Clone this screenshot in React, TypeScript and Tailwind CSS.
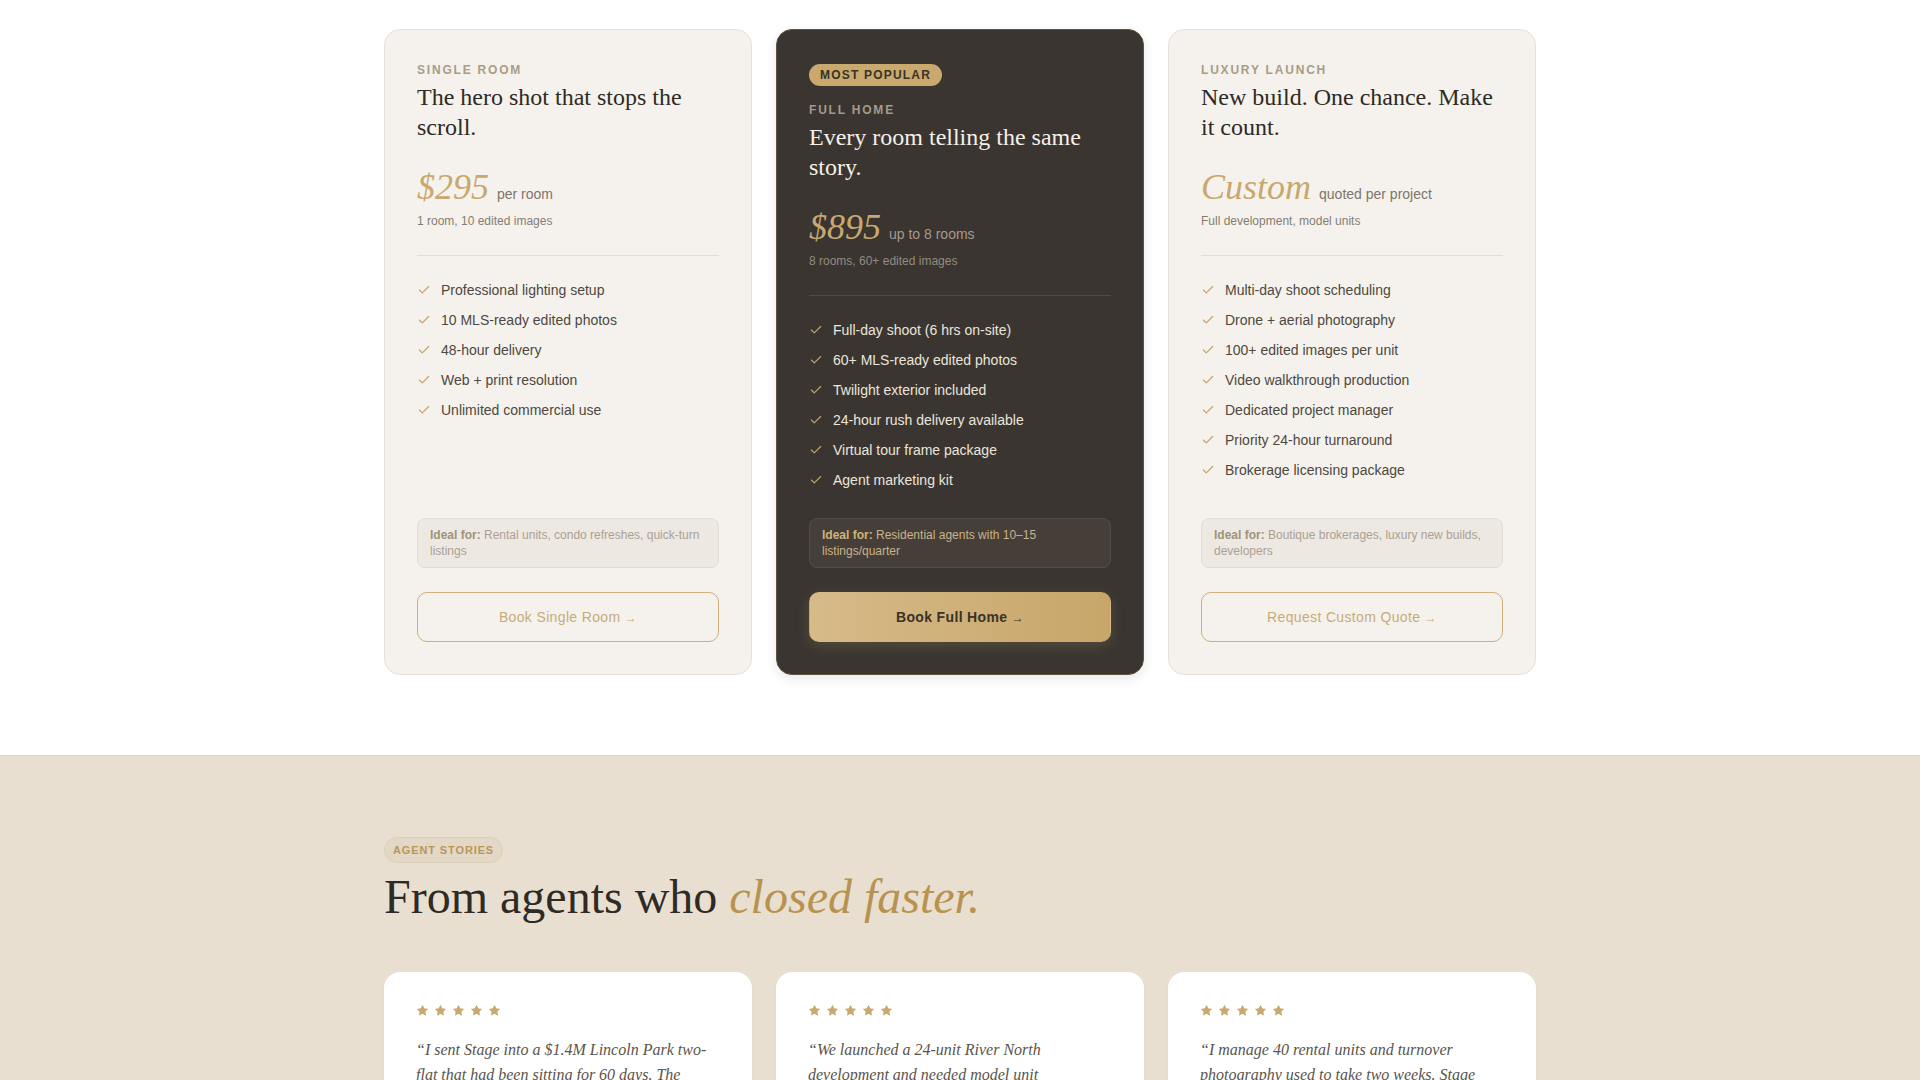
import { Check, Star } from "lucide-react";

const serif = { fontFamily: '"Liberation Serif", "Times New Roman", serif' };

interface Plan {
  key: string;
  label: string;
  title: string;
  price: string;
  unit: string;
  note: string;
  features: string[];
  ideal: string;
  cta: string;
  featured?: boolean;
}

const plans: Plan[] = [
  {
    key: "single",
    label: "Single Room",
    title: "The hero shot that stops the scroll.",
    price: "$295",
    unit: "per room",
    note: "1 room, 10 edited images",
    features: [
      "Professional lighting setup",
      "10 MLS-ready edited photos",
      "48-hour delivery",
      "Web + print resolution",
      "Unlimited commercial use",
    ],
    ideal: "Rental units, condo refreshes, quick-turn listings",
    cta: "Book Single Room",
  },
  {
    key: "full",
    label: "Full Home",
    title: "Every room telling the same story.",
    price: "$895",
    unit: "up to 8 rooms",
    note: "8 rooms, 60+ edited images",
    features: [
      "Full-day shoot (6 hrs on-site)",
      "60+ MLS-ready edited photos",
      "Twilight exterior included",
      "24-hour rush delivery available",
      "Virtual tour frame package",
      "Agent marketing kit",
    ],
    ideal: "Residential agents with 10–15 listings/quarter",
    cta: "Book Full Home",
    featured: true,
  },
  {
    key: "luxury",
    label: "Luxury Launch",
    title: "New build. One chance. Make it count.",
    price: "Custom",
    unit: "quoted per project",
    note: "Full development, model units",
    features: [
      "Multi-day shoot scheduling",
      "Drone + aerial photography",
      "100+ edited images per unit",
      "Video walkthrough production",
      "Dedicated project manager",
      "Priority 24-hour turnaround",
      "Brokerage licensing package",
    ],
    ideal: "Boutique brokerages, luxury new builds, developers",
    cta: "Request Custom Quote",
  },
];

const stories = [
  "\u201CI sent Stage into a $1.4M Lincoln Park two-flat that had been sitting for 60 days. The reshoot went live on a Thursday and we had three showings booked by Saturday.\u201D",
  "\u201CWe launched a 24-unit River North development and needed model unit photography that felt consistent across every floor plan. They delivered in a week.\u201D",
  "\u201CI manage 40 rental units and turnover photography used to take two weeks. Stage gets every unit shot and listed within 48 hours now.\u201D",
];

function PlanCard({ plan }: { plan: Plan }) {
  const dark = plan.featured;
  return (
    <div
      className={`flex flex-col rounded-2xl border p-8 ${
        dark
          ? "border-[#5f523f] bg-[#3a3531] shadow-[0_4px_12px_rgba(58,53,49,0.10)]"
          : "border-[#e6e0d7] bg-[#f5f2ed]"
      }`}
    >
      {dark && (
        <div className="mb-4">
          <span className="inline-block rounded-full bg-[#c9a96e] px-[11px] py-[3px] text-xs leading-4 font-bold tracking-[0.1em] text-[#3a3226] uppercase">
            Most Popular
          </span>
        </div>
      )}
      <div
        className={`text-xs leading-4 font-bold tracking-[0.15em] uppercase ${
          dark ? "text-[#a59a8a]" : "text-[#a99c88]"
        }`}
      >
        {plan.label}
      </div>
      <h3
        style={serif}
        className={`mt-1 text-2xl leading-[1.25] ${dark ? "text-[#f5f0e8]" : "text-[#2e2a25]"}`}
      >
        {plan.title}
      </h3>
      <div className="mt-[27px] flex items-baseline gap-2">
        <span style={serif} className="text-4xl leading-none text-[#c8a86e] italic">
          {plan.price}
        </span>
        <span className={`text-sm ${dark ? "text-[#a39a8e]" : "text-[#7d756b]"}`}>{plan.unit}</span>
      </div>
      <p className={`mt-2 text-xs leading-4 ${dark ? "text-[#958b7f]" : "text-[#857d72]"}`}>
        {plan.note}
      </p>
      <div className={`mt-[26px] mb-6 h-px ${dark ? "bg-[#524a42]" : "bg-[#e5ded3]"}`} />
      <ul className="mb-7 flex flex-1 flex-col gap-2.5">
        {plan.features.map((f) => (
          <li key={f} className="flex items-center gap-2.5">
            <Check size={14} strokeWidth={2} className="shrink-0 text-[#c1a36b]" />
            <span className={`text-sm leading-5 ${dark ? "text-[#ebe5dc]" : "text-[#4d4840]"}`}>{f}</span>
          </li>
        ))}
      </ul>
      <div
        className={`rounded-lg border px-3 py-2 text-xs leading-4 ${
          dark
            ? "border-[#554c43] bg-[#463f39] text-[#c9b38b]"
            : "border-[#e2dcd3] bg-[#ede8e1] text-[#aaa196]"
        }`}
      >
        <span className={`font-bold ${dark ? "text-[#d0b27a]" : "text-[#a0937f]"}`}>Ideal for:</span>{" "}
        {plan.ideal}
      </div>
      <button
        className={`mt-6 rounded-[10px] py-3.5 text-sm leading-5 tracking-wide ${
          dark
            ? "border border-transparent bg-gradient-to-r from-[#d6ba88] to-[#c8a66a] font-bold text-[#3a3226] shadow-[0_4px_14px_rgba(201,169,110,0.2)]"
            : "border border-[#cdb07a] font-medium text-[#c9ab78]"
        }`}
      >
        {plan.cta} <span className="text-xs">→</span>
      </button>
    </div>
  );
}

export default function App() {
  return (
    <div className="min-h-screen bg-white" style={{ fontFamily: '"Liberation Sans", Arial, sans-serif' }}>
      {/* Pricing */}
      <section className="pt-[29px] pb-20">
        <div className="mx-auto grid max-w-6xl grid-cols-3 gap-6">
          {plans.map((p) => (
            <PlanCard key={p.key} plan={p} />
          ))}
        </div>
      </section>

      {/* Testimonials */}
      <section className="border-t border-[#e0d6c6] bg-[#e8dfd1] pt-[81px] pb-24">
        <div className="mx-auto max-w-6xl">
          <span className="inline-block rounded-full border border-[#ddd0ba] bg-[#e3d8c5] px-2 py-1 text-[11px] leading-4 font-bold tracking-[0.08em] text-[#b8975a] uppercase">
            Agent Stories
          </span>
          <h2 style={serif} className="mt-2 text-5xl leading-[1.1] text-[#2e2a25]">
            From agents who <em className="text-[#b8934f]">closed faster.</em>
          </h2>
          <div className="mt-12 grid grid-cols-3 gap-6">
            {stories.map((s, i) => (
              <div key={i} className="rounded-2xl bg-white p-8 shadow-[0_1px_3px_rgba(0,0,0,0.03)]">
                <div className="flex gap-[5px] text-[#c9a96e]">
                  {[0, 1, 2, 3, 4].map((n) => (
                    <Star key={n} size={13} fill="currentColor" strokeWidth={0} />
                  ))}
                </div>
                <p style={serif} className="mt-5 text-base leading-[1.6] text-[#5a544c] italic">
                  {s}
                </p>
                <div className="mt-6 h-px bg-[#efe9df]" />
                <div className="mt-5 text-sm font-bold text-[#2e2a25]">Agent</div>
              </div>
            ))}
          </div>
        </div>
      </section>
    </div>
  );
}
